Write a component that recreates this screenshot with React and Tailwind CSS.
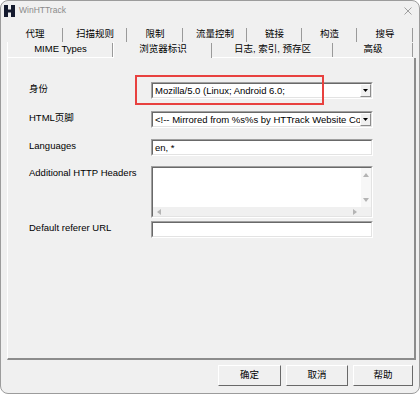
import React from 'react'

const row1 = [
  ['代理', 56],
  ['扫描规则', 64],
  ['限制', 56],
  ['流量控制', 64],
  ['链接', 55],
  ['构造', 55],
  ['搜导', 56],
]

const row2 = [
  ['MIME Types', 106, false],
  ['浏览器标识', 99, true],
  ['日志, 索引, 预存区', 121, false],
  ['高级', 80, false],
]

function Sunken({ className = '', children }) {
  return (
    <div className={`border border-t-[#a0a0a0] border-l-[#a0a0a0] border-r-white border-b-white ${className}`}>
      <div className="h-full border border-t-[#696969] border-l-[#696969] border-r-[#e3e3e3] border-b-[#e3e3e3] bg-white flex overflow-hidden">
        {children}
      </div>
    </div>
  )
}

function Combo({ value }) {
  return (
    <Sunken className="w-[222px] h-[17px]">
      <div className="flex-1 min-w-0 pl-[2px] leading-[13px] whitespace-nowrap overflow-hidden">{value}</div>
      <div className="w-[11px] h-full flex items-center justify-center bg-[#f0f0f0] border border-t-white border-l-white border-r-[#8c8c8c] border-b-[#8c8c8c]">
        <svg width="5" height="3" viewBox="0 0 5 3">
          <path d="M0 0H5L2.5 3Z" fill="#000" />
        </svg>
      </div>
    </Sunken>
  )
}

function Label({ children }) {
  return <div className="w-[122px] shrink-0 pt-[1px] leading-[12px]">{children}</div>
}

function Arrow({ dir }) {
  const d = {
    up: 'M0 4L3 0L6 4Z',
    down: 'M0 0H6L3 4Z',
    left: 'M4 0V6L0 3Z',
    right: 'M0 0V6L4 3Z',
  }[dir]
  const w = dir === 'up' || dir === 'down' ? 6 : 4
  const h = dir === 'up' || dir === 'down' ? 4 : 6
  return (
    <svg width={w} height={h} viewBox={`0 0 ${w} ${h}`}>
      <path d={d} fill="#b4b4b4" />
    </svg>
  )
}

function Button({ children, w }) {
  return (
    <div className={`${w} h-[21px] flex items-center justify-center bg-[#f0f0f0] border border-t-white border-l-white border-r-[#696969] border-b-[#696969]`}>
      {children}
    </div>
  )
}

export default function App() {
  return (
    <div className="w-[420px] h-[394px] bg-[#f0f0f0] border border-[#9c9c9c] rounded-lg overflow-hidden flex flex-col text-[9.5px] text-black font-['Liberation_Sans','Noto_Sans_CJK_SC',sans-serif]">
      {/* title bar */}
      <div className="h-[19px] flex items-center pl-[3px] pr-[7px]">
        <svg width="11" height="12" viewBox="0 0 11 12">
          <rect x="0" y="0" width="4" height="12" fill="#141a2e" />
          <rect x="7" y="0" width="4" height="12" fill="#141a2e" />
          <rect x="3" y="4.5" width="5" height="3" fill="#141a2e" />
        </svg>
        <span className="ml-[4px] text-[8.5px] text-[#8a8a8a]">WinHTTrack</span>
        <div className="flex-1" />
        <svg width="8" height="8" viewBox="0 0 8 8">
          <path d="M0.5 0.5L7.5 7.5M7.5 0.5L0.5 7.5" stroke="#8a8a8a" strokeWidth="0.8" />
        </svg>
      </div>

      {/* tab control */}
      <div className="mt-[6px] ml-[6px] w-[409px] flex flex-col">
        <div className="flex h-[16px]">
          {row1.map(([t, w]) => (
            <div key={t} style={{ width: w }} className="relative flex items-center justify-center">
              {t}
              <div className="absolute right-0 top-[2px] bottom-0 w-px bg-[#9a9a9a]" />
            </div>
          ))}
        </div>
        <div className="flex h-[16px]">
          {row2.map(([t, w, sel]) => (
            <div
              key={t}
              style={{ width: w }}
              className={`relative flex justify-center ${sel ? 'items-start pt-[1px] border-l border-l-white' : 'items-center border-b border-b-white'} ${t === 'MIME Types' ? 'border-l border-l-white' : ''}`}
            >
              <span className={sel ? 'leading-[12px]' : ''}>{t}</span>
              <div className="absolute right-0 top-[1px] bottom-0 w-px bg-[#9a9a9a]" />
            </div>
          ))}
        </div>

        {/* panel */}
        <div className="relative h-[302px] border-l border-l-white border-r-2 border-r-[#8c8c8c] border-b-2 border-b-[#8c8c8c] pt-[24px] pl-[21px] flex flex-col">
          <div className="absolute left-[127px] top-[17px] w-[189px] h-[30px] border-2 border-[#e8413f]" />

          <div className="flex items-start">
            <Label>身份</Label>
            <Combo value="Mozilla/5.0 (Linux; Android 6.0;" />
          </div>
          <div className="flex items-start mt-[12px]">
            <Label>HTML页脚</Label>
            <Combo value="<!-- Mirrored from %s%s by HTTrack Website Co" />
          </div>
          <div className="flex items-start mt-[11px]">
            <Label>Languages</Label>
            <Sunken className="w-[222px] h-[17px]">
              <div className="pl-[2px] leading-[13px]">en, *</div>
            </Sunken>
          </div>
          <div className="flex items-start mt-[10px]">
            <Label>Additional HTTP Headers</Label>
            <Sunken className="w-[222px] h-[52px]">
              <div className="flex-1 flex flex-col">
                <div className="flex-1 flex">
                  <div className="flex-1" />
                  <div className="w-[10px] bg-[#f7f7f7] flex flex-col items-center justify-between py-[5px]">
                    <Arrow dir="up" />
                    <Arrow dir="down" />
                  </div>
                </div>
                <div className="h-[9px] flex">
                  <div className="flex-1 bg-[#f0f0f0] flex items-center justify-between px-[4px]">
                    <Arrow dir="left" />
                    <Arrow dir="right" />
                  </div>
                  <div className="w-[10px] bg-[#f0f0f0]" />
                </div>
              </div>
            </Sunken>
          </div>
          <div className="flex items-start mt-[3px]">
            <Label>Default referer URL</Label>
            <Sunken className="w-[222px] h-[17px]">
              <div />
            </Sunken>
          </div>
        </div>
      </div>

      {/* buttons */}
      <div className="mt-[5px] flex justify-end gap-[5px] pr-[6px]">
        <Button w="w-[63px]">确定</Button>
        <Button w="w-[62px]">取消</Button>
        <Button w="w-[60px]">帮助</Button>
      </div>
    </div>
  )
}
